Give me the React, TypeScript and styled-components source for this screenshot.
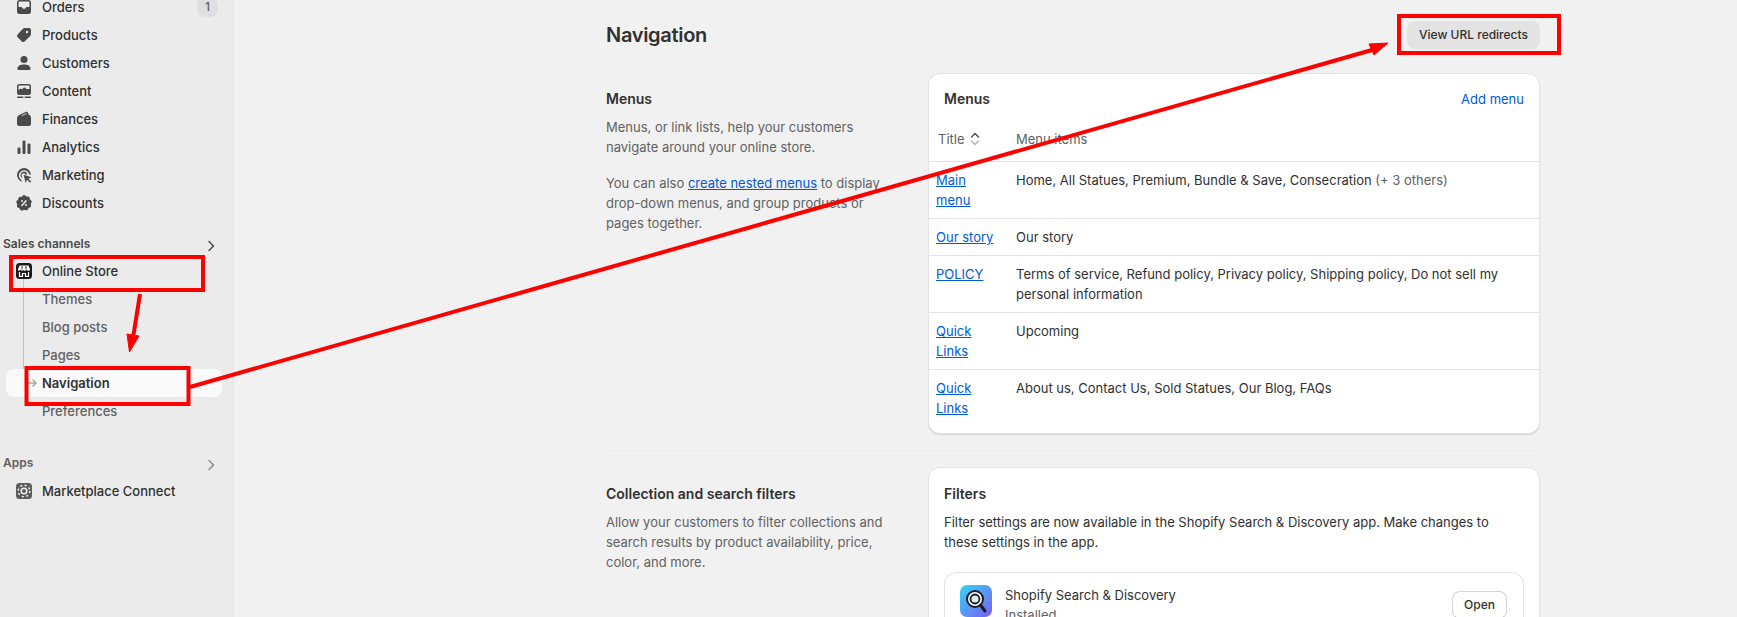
import React from "react";
import styled, { createGlobalStyle } from "styled-components";

const GlobalStyle = createGlobalStyle`
  html, body {
    margin: 0;
    height: 617px;
    overflow: hidden;
    background: #f1f1f1;
    font-family: Inter, "Noto Sans", sans-serif;
    font-size: 13px;
    line-height: 20px;
    color: #303030;
  }
`;

const Page = styled.div`
  position: relative;
  display: flex;
  width: 1737px;
  height: 617px;
  overflow: hidden;
`;

const Sidebar = styled.aside`
  flex: 0 0 234px;
  box-sizing: border-box;
  background: #ebebeb;
  border-right: 1px solid #e6e6e6;
  padding: 0 0 0 6px;
  margin-top: -7px;
`;

const NavRow = styled.div<{ $active?: boolean; $sub?: boolean }>`
  position: relative;
  display: flex;
  align-items: center;
  width: 216px;
  height: 28px;
  box-sizing: border-box;
  padding: 0 4px 0 10px;
  gap: 10px;
  border-radius: 8px;
  font-weight: ${(p) => (p.$active ? 600 : 450)};
  color: ${(p) => (p.$sub && !p.$active ? "#616161" : "#303030")};
  background: ${(p) => (p.$active ? "#fafafa" : "transparent")};
  padding-left: ${(p) => (p.$sub ? "36px" : "10px")};
`;

const NavIcon = styled.svg`
  flex: 0 0 20px;
  width: 20px;
  height: 20px;
  margin-left: -2px;
  margin-right: -2px;
`;

const Count = styled.span`
  margin-left: auto;
  width: 21px;
  height: 20px;
  border-radius: 8px;
  background: #dfdfdf;
  color: #616161;
  text-align: center;
  font-size: 12px;
`;

const Tree = styled.div`
  position: relative;
`;

const TreeLine = styled.span`
  position: absolute;
  left: 17px;
  top: 14px;
  width: 1px;
  height: 102px;
  background: #c4c4c4;
`;

const TreeTick = styled.svg`
  position: absolute;
  left: 21px;
  top: 8px;
  width: 11px;
  height: 12px;
`;

const SectionHead = styled.div<{ $top: number; $bottom: number; $muted?: boolean }>`
  display: flex;
  align-items: center;
  justify-content: space-between;
  width: 216px;
  height: 20px;
  margin: ${(p) => p.$top}px 0 ${(p) => p.$bottom}px -3px;
  font-size: 12px;
  font-weight: 600;
  color: ${(p) => (p.$muted ? "#616161" : "#4a4a4a")};
  svg {
    margin: 3px 0 0 0;
  }
`;

const Main = styled.main`
  flex: 1;
  min-width: 0;
  padding: 0 197px 0 372px;
`;

const TitleBar = styled.header`
  display: flex;
  align-items: center;
  justify-content: space-between;
  height: 73px;
  padding-bottom: 3px;
  box-sizing: border-box;
`;

const PageTitle = styled.h1`
  margin: 0;
  font-size: 20px;
  line-height: 24px;
  font-weight: 600;
  letter-spacing: -0.3px;
  color: #303030;
`;

const GreyButton = styled.button`
  width: 133px;
  height: 28px;
  border: 0;
  border-radius: 8px;
  background: #e3e3e3;
  color: #303030;
  font: 450 12px/16px Inter, sans-serif;
`;

const Section = styled.section`
  display: grid;
  grid-template-columns: 322px 612px;
`;

const Intro = styled.div<{ $top: number }>`
  padding: ${(p) => p.$top}px 30px 0 0;
`;

const SectionTitle = styled.h2`
  margin: 0 0 8px;
  font-size: 14px;
  line-height: 20px;
  font-weight: 600;
  color: #303030;
`;

const Muted = styled.p`
  margin: 0 0 16px;
  color: #616161;
`;

const InlineLink = styled.a`
  color: #005bd3;
  text-decoration: underline;
`;

const Card = styled.div`
  box-sizing: border-box;
  background: #fff;
  border: 1px solid #e3e3e3;
  border-radius: 12px;
  box-shadow: 0 1px 1px rgba(0, 0, 0, 0.12);
  overflow: hidden;
`;

const CardHead = styled.div`
  display: flex;
  justify-content: space-between;
  align-items: center;
  padding: 15px 15px 0;
  height: 20px;
`;

const CardTitle = styled.h3`
  margin: 0;
  font-size: 14px;
  line-height: 20px;
  font-weight: 600;
`;

const AddLink = styled.a`
  color: #005bd3;
`;

const MenuRow = styled.div<{ $last?: boolean }>`
  display: grid;
  grid-template-columns: 80px 1fr;
  padding: 8px 7px ${(p) => (p.$last ? "15px" : "8px")};
  border-top: 1px solid #e3e3e3;
`;

const LinkCell = styled.span`
  padding-right: 16px;
`;

const HeadRow = styled.div`
  display: grid;
  grid-template-columns: 80px 1fr;
  align-items: center;
  height: 29px;
  padding: 0 7px 8px;
  margin-top: 15px;
  color: #616161;
`;

const TitleCell = styled.span`
  display: flex;
  align-items: center;
  gap: 3px;
  padding-left: 2px;
`;

const CardBody = styled.div`
  padding: 16px 15px;
`;

const CardText = styled.div`
  margin-top: 8px;
`;

const AppBox = styled.div`
  display: flex;
  align-items: flex-start;
  margin-top: 20px;
  padding: 12px 15px;
  height: 80px;
  border: 1px solid #e3e3e3;
  border-radius: 12px;
`;

const AppName = styled.div`
  margin-left: 13px;
  color: #303030;
  flex: 1;
`;

const OpenButton = styled.button`
  width: 55px;
  height: 28px;
  margin: 6px 1px 0 0;
  background: #fff;
  border: 1px solid #d4d4d4;
  border-bottom-color: #b5b5b5;
  border-radius: 8px;
  color: #303030;
  font: 450 12px/16px Inter, sans-serif;
`;

const SecondCard = styled(Card)`
  height: 190px;
`;

const Divider = styled.hr`
  border: 0;
  border-top: 1px solid #ebebeb;
  margin: 16px 0;
`;

const AppGlyph = styled.svg`
  flex: 0 0 32px;
`;

const Overlay = styled.svg`
  position: absolute;
  left: 0;
  top: 0;
  width: 1737px;
  height: 617px;
  pointer-events: none;
`;

const icons: Record<string, React.ReactNode> = {
  orders: (
    <path d="M5.500 3A2.500 2.500 0 0 0 3 5.500v9A2.500 2.500 0 0 0 5.500 17h9a2.500 2.500 0 0 0 2.500-2.500v-9A2.500 2.500 0 0 0 14.500 3h-9ZM4.500 5.500a1 1 0 0 1 1-1h9a1 1 0 0 1 1 1V10h-2.600c-.6 0-1 .3-1.200.8l-.2.500c-.1.3-.3.4-.6.4H9.100c-.3 0-.5-.1-.6-.4l-.2-.5c-.2-.5-.6-.8-1.200-.8H4.500V5.500Z" fillRule="evenodd" />
  ),
  products: (
    <path d="M10.700 3H15a2 2 0 0 1 2 2v4.300c0 .6-.2 1.100-.6 1.500l-5.800 5.600a2 2 0 0 1-2.800 0l-4.200-4.200a2 2 0 0 1 0-2.800l5.600-5.800c.4-.4 1-.6 1.500-.6ZM13 8.200a1.200 1.200 0 1 0 0-2.400 1.200 1.200 0 0 0 0 2.400Z" fillRule="evenodd" />
  ),
  customers: (
    <>
      <circle cx="10" cy="6.500" r="3.500" />
      <path d="M3.500 15.700c0-2.800 2.800-4.200 6.500-4.200s6.500 1.400 6.500 4.200c0 .7-.5 1.300-1.300 1.300H4.800c-.8 0-1.300-.6-1.300-1.300Z" />
    </>
  ),
  content: (
    <path d="M5.500 3A2.500 2.500 0 0 0 3 5.500v6A2.500 2.500 0 0 0 5.500 14h9a2.500 2.500 0 0 0 2.500-2.500v-6A2.500 2.500 0 0 0 14.500 3h-9ZM4.500 5.500a1 1 0 0 1 1-1h9a1 1 0 0 1 1 1V8h-2.500a1.500 1.500 0 0 1-1.500-1.200L10 6.500 8 8.200l-1.500-.7-2 1.700v-3.700ZM3.750 15.500a.75.75 0 0 0 0 1.500h5a.75.75 0 0 0 0-1.500h-5ZM11.250 15.500a.75.75 0 0 0 0 1.500h5a.75.75 0 0 0 0-1.500h-5Z" fillRule="evenodd" />
  ),
  finances: (
    <>
      <path d="M3 9.500C3 7.800 4 6.500 5.500 5.800l6.300-2.900c1-.4 2 .1 2.300 1.100l.5 1.500c1.400.5 2.400 1.700 2.400 3.300v5.700a2.500 2.500 0 0 1-2.500 2.500h-9A2.500 2.500 0 0 1 3 14.500v-5Z" />
      <path d="M7.500 6.600 12.600 4.600" stroke="#ebebeb" strokeWidth="0.800" fill="none" />
    </>
  ),
  analytics: (
    <>
      <rect x="3.500" y="10.500" width="3" height="6.500" rx="1.200" />
      <rect x="8.500" y="3.500" width="3" height="13.500" rx="1.200" />
      <rect x="13.500" y="6.500" width="3" height="10.500" rx="1.200" />
    </>
  ),
  marketing: (
    <>
      <path d="M10 3a7 7 0 0 0-2.100 13.680l-.55-1.700A5.250 5.250 0 1 1 15.200 9.300l1.750.55A7 7 0 0 0 10 3Z" />
      <path d="M10 6.500a3.500 3.500 0 0 0-1.600 6.600l-.55-1.800a1.800 1.800 0 1 1 3.400-2l1.850.6A3.500 3.500 0 0 0 10 6.500Z" />
      <path d="m9.600 9.700 8 2.600-3.400 1.400 2.900 2.900-1.100 1.100-2.900-2.900-1.400 3.300-2.100-8.400Z" />
    </>
  ),
  discounts: (
    <path d="M8.700 2.600a2 2 0 0 1 2.600 0l1 .9 1.400-.1a2 2 0 0 1 2 1.700l.2 1.300 1.100.8a2 2 0 0 1 .4 2.600l-.7 1.100.4 1.300a2 2 0 0 1-1.300 2.300l-1.200.5-.6 1.200a2 2 0 0 1-2.500.9L10 16.900l-1.500.5a2 2 0 0 1-2.500-.9l-.6-1.200-1.200-.5a2 2 0 0 1-1.300-2.300l.4-1.300-.7-1.100a2 2 0 0 1 .4-2.600l1.100-.8.200-1.300a2 2 0 0 1 2-1.700l1.400.1 1-.9ZM8 8.900a1 1 0 1 0 0-2 1 1 0 0 0 0 2Zm4 4.200a1 1 0 1 0 0-2 1 1 0 0 0 0 2Zm.6-5.700a.75.75 0 0 0-1.100-.1l-4.200 4.600a.75.75 0 1 0 1.100 1l4.200-4.500Z" fillRule="evenodd" />
  ),
};

const mainNav = [
  { key: "orders", label: "Orders", count: 1 },
  { key: "products", label: "Products" },
  { key: "customers", label: "Customers" },
  { key: "content", label: "Content" },
  { key: "finances", label: "Finances" },
  { key: "analytics", label: "Analytics" },
  { key: "marketing", label: "Marketing" },
  { key: "discounts", label: "Discounts" },
];

const menus = [
  { title: "Main menu", items: "Home, All Statues, Premium, Bundle & Save, Consecration", extra: " (+ 3 others)" },
  { title: "Our story", items: "Our story" },
  { title: "POLICY", items: "Terms of service, Refund policy, Privacy policy, Shipping policy, Do not sell my personal information" },
  { title: "Quick Links", items: "Upcoming" },
  { title: "Quick Links", items: "About us, Contact Us, Sold Statues, Our Blog, FAQs" },
];

const Chevron = ({ color }: { color: string }) => (
  <svg width="16" height="16" viewBox="0 0 16 16" fill="none" stroke={color} strokeWidth="1.500" strokeLinecap="round" strokeLinejoin="round">
    <path d="M6 3.500 10.500 8 6 12.500" />
  </svg>
);

const SortIcon = () => (
  <svg width="14" height="18" viewBox="0 0 14 18" fill="none" strokeWidth="1.400" strokeLinecap="round" strokeLinejoin="round">
    <path d="M3.500 7 7 3.500 10.500 7" stroke="#4a4a4a" />
    <path d="M3.500 11 7 14.500 10.500 11" stroke="#b5b5b5" />
  </svg>
);

const SearchAppIcon = () => (
  <AppGlyph width="32" height="32" viewBox="0 0 32 32">
    <defs>
      <linearGradient id="appGrad" x1="0" y1="0" x2="1" y2="1">
        <stop offset="0" stopColor="#35d6f5" />
        <stop offset="1" stopColor="#7a5cf5" />
      </linearGradient>
    </defs>
    <rect width="32" height="32" rx="7" fill="url(#appGrad)" />
    <circle cx="15" cy="14" r="8" fill="#fff" stroke="#1c1c22" strokeWidth="2" />
    <circle cx="15" cy="14" r="4.500" fill="#d8ecf5" stroke="#1c1c22" strokeWidth="1.800" />
    <path d="m20.500 20 4.500 6" stroke="#1c1c22" strokeWidth="3" strokeLinecap="round" />
  </AppGlyph>
);

export default function App() {
  return (
    <Page>
      <GlobalStyle />
      <Sidebar>
        {mainNav.map((n) => (
          <NavRow key={n.key}>
            <NavIcon viewBox="0 0 20 20" fill="#4a4a4a">{icons[n.key]}</NavIcon>
            {n.label}
            {n.count && <Count>{n.count}</Count>}
          </NavRow>
        ))}
        <SectionHead $top={17} $bottom={3}>
          Sales channels
          <Chevron color="#4a4a4a" />
        </SectionHead>
        <Tree>
          <TreeLine />
          <NavRow>
            <NavIcon viewBox="0 0 20 20">
              <rect x="2" y="2" width="16" height="16" rx="3.500" fill="#1a1a1a" />
              <path d="M5.500 4.500h9l1.500 3.700a1.500 1.500 0 0 1-1.500 1.500c-.7 0-1.300-.3-1.800-.9-.5.6-1.100.9-1.800.9-.6 0-1.100-.3-1.400-.7-.3.4-.8.7-1.400.7-.7 0-1.300-.3-1.800-.9-.5.6-1.100.9-1.800.9A1.500 1.500 0 0 1 4 8.200l1.500-3.700Z" fill="#fff" />
              <path d="M8 5v3.500M12 5v3.500" stroke="#1a1a1a" strokeWidth="0.900" />
              <path d="M5.500 11v4.300h3V12.500h3v2.800h3V11" fill="none" stroke="#fff" strokeWidth="1.200" />
            </NavIcon>
            Online Store
          </NavRow>
          <NavRow $sub>Themes</NavRow>
          <NavRow $sub>Blog posts</NavRow>
          <NavRow $sub>Pages</NavRow>
          <NavRow $sub $active>
            <TreeTick viewBox="0 0 11 12" fill="none" stroke="#a8a8a8" strokeWidth="1.500">
              <path d="M1 6h8M5.500 2.500 9 6l-3.500 3.500" />
            </TreeTick>
            Navigation
          </NavRow>
          <NavRow $sub>Preferences</NavRow>
        </Tree>
        <SectionHead $top={28} $bottom={4} $muted>
          Apps
          <Chevron color="#8a8a8a" />
        </SectionHead>
        <NavRow>
          <NavIcon viewBox="0 0 20 20">
            <rect x="2" y="2" width="16" height="16" rx="3.500" fill="#5c5c5c" />
            <circle cx="10" cy="10" r="2.800" fill="none" stroke="#f2f2f2" strokeWidth="1.500" />
            <circle cx="10" cy="10" r="5.800" fill="none" stroke="#f2f2f2" strokeWidth="1.500" strokeDasharray="2 2.550" />
          </NavIcon>
          Marketplace Connect
        </NavRow>
      </Sidebar>
      <Main>
        <TitleBar>
          <PageTitle>Navigation</PageTitle>
          <GreyButton>View URL redirects</GreyButton>
        </TitleBar>
        <Section>
          <Intro $top={16}>
            <SectionTitle>Menus</SectionTitle>
            <Muted>Menus, or link lists, help your customers navigate around your online store.</Muted>
            <Muted>
              You can also <InlineLink>create nested menus</InlineLink> to display drop-down menus, and group products or pages together.
            </Muted>
          </Intro>
          <Card>
            <CardHead>
              <CardTitle>Menus</CardTitle>
              <AddLink>Add menu</AddLink>
            </CardHead>
            <HeadRow>
              <TitleCell>
                Title <SortIcon />
              </TitleCell>
              <span>Menu items</span>
            </HeadRow>
            {menus.map((m, i) => (
              <MenuRow key={i} $last={i === menus.length - 1}>
                <LinkCell>
                  <InlineLink>{m.title}</InlineLink>
                </LinkCell>
                <span>
                  {m.items}
                  {m.extra && <Muted as="span">{m.extra}</Muted>}
                </span>
              </MenuRow>
            ))}
          </Card>
        </Section>
        <Divider />
        <Section>
          <Intro $top={17}>
            <SectionTitle>Collection and search filters</SectionTitle>
            <Muted>Allow your customers to filter collections and search results by product availability, price, color, and more.</Muted>
          </Intro>
          <SecondCard>
            <CardBody>
              <CardTitle>Filters</CardTitle>
              <CardText>
                Filter settings are now available in the Shopify Search &amp; Discovery app. Make changes to these settings in the app.
              </CardText>
              <AppBox>
                <SearchAppIcon />
                <AppName>
                  Shopify Search &amp; Discovery
                  <Muted as="div">Installed</Muted>
                </AppName>
                <OpenButton>Open</OpenButton>
              </AppBox>
            </CardBody>
          </SecondCard>
        </Section>
      </Main>
      <Overlay viewBox="0 0 1737 617" fill="none" stroke="#fe0000" strokeWidth="4">
        <rect x="11" y="257" width="192" height="33" />
        <rect x="26.500" y="368" width="162" height="36" />
        <rect x="1399" y="16" width="160" height="37" />
        <path d="M190 387 1372 50" />
        <path d="M1388 43 1374 55 1369 44Z" fill="#fe0000" strokeWidth="1" />
        <path d="M140 294 133 338" />
        <path d="M129.500 352 127 334 139 336Z" fill="#fe0000" strokeWidth="1" />
      </Overlay>
    </Page>
  );
}
